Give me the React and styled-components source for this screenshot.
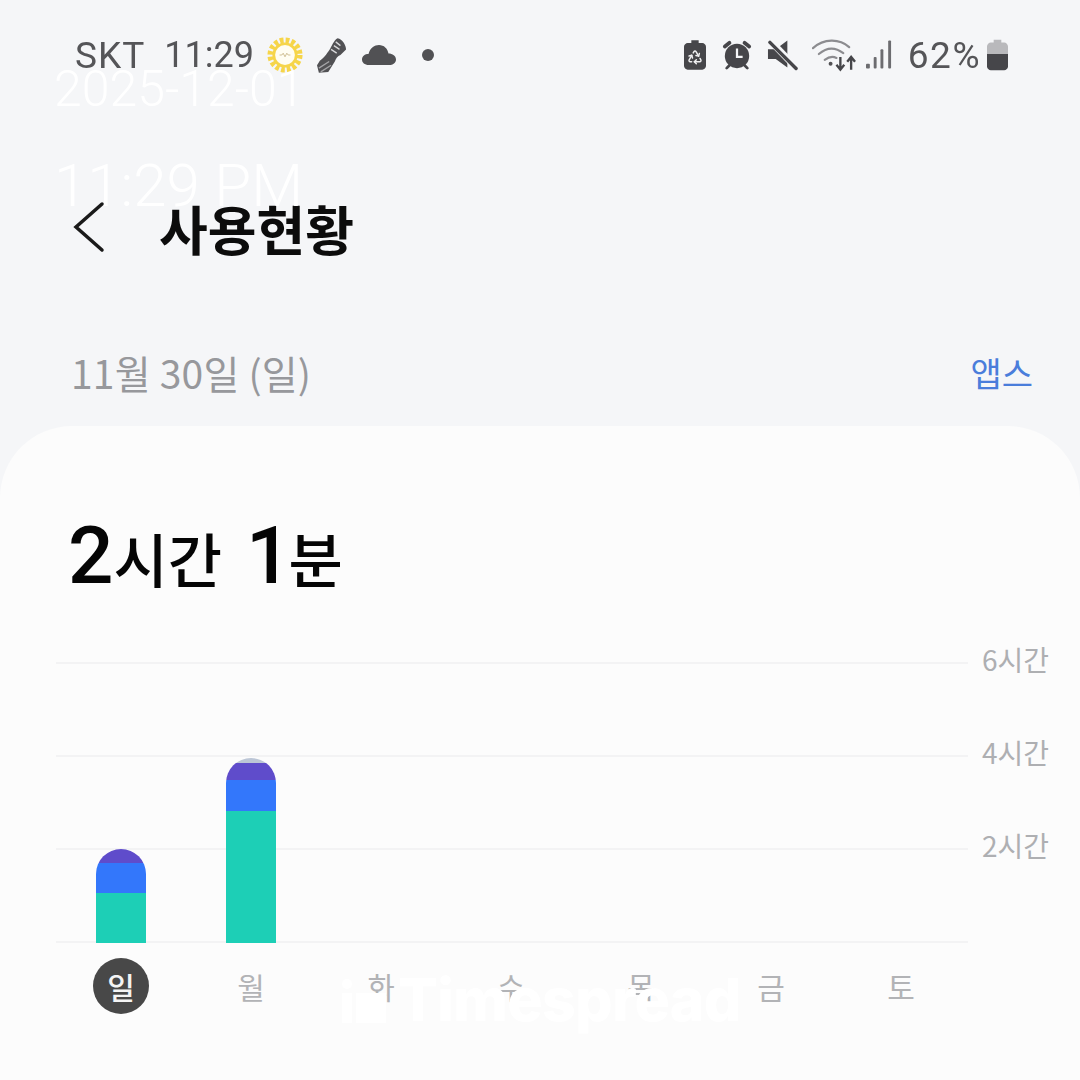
import React from "react";
import styled, { createGlobalStyle } from "styled-components";
import { Recycle } from "lucide-react";

const GlobalStyle = createGlobalStyle`
  html, body {
    margin: 0;
    padding: 0;
    background: #f5f6f8;
  }
`;

const KR = `"Noto Sans CJK KR", "Noto Sans", sans-serif`;

const Page = styled.div`
  position: relative;
  width: 1080px;
  height: 1080px;
  overflow: hidden;
  background: #f5f6f8;
  font-family: ${KR};
`;

const StatusBar = styled.div`
  display: flex;
  align-items: center;
  justify-content: space-between;
  height: 110px;
  padding: 0 72px 0 75px;
  box-sizing: border-box;
  color: #555558;
  filter: blur(0.5px);
`;

const StatusGroup = styled.div`
  display: flex;
  align-items: center;
`;

const StatusText = styled.span`
  font-family: Roboto, "Liberation Sans", sans-serif;
  font-size: ${(p) => p.$size || 37}px;
  font-weight: 400;
  letter-spacing: ${(p) => p.$spacing || 0}px;
  margin-right: ${(p) => p.$right || 0}px;
  white-space: pre;
`;

const SaverIconBox = styled.div`
  position: relative;
  width: 22px;
  height: 32px;
  margin-right: 16px;
`;

const SaverGlyph = styled(Recycle)`
  position: absolute;
  left: 3px;
  top: 10px;
`;

const IconSvg = styled.svg`
  flex: none;
  margin-left: ${(p) => p.$left || 0}px;
  margin-right: ${(p) => p.$right || 0}px;
`;

const Header = styled.div`
  display: flex;
  align-items: center;
  height: 72px;
  margin-top: 79px;
  padding-left: 72px;
`;

const BackIcon = styled.svg`
  width: 34px;
  height: 56px;
  margin-right: 53px;
`;

const Title = styled.h1`
  margin: 6px 0 0;
  font-size: 53px;
  font-weight: 700;
  line-height: 72px;
  color: #0c0c0c;
`;

const DateRow = styled.div`
  display: flex;
  align-items: center;
  justify-content: space-between;
  height: 60px;
  margin-top: 81px;
  padding: 0 47px 0 71px;
`;

const DateLabel = styled.span`
  font-size: 39px;
  letter-spacing: 0.2px;
  color: #97989c;
`;

const AppsLink = styled.span`
  font-size: 34px;
  color: #4a7ddb;
`;

const Card = styled.div`
  height: 654px;
  margin-top: 24px;
  padding: 84px 0 0 56px;
  box-sizing: border-box;
  background: #fcfcfc;
  border-radius: 72px 72px 0 0;
`;

const Usage = styled.div`
  display: flex;
  align-items: baseline;
  height: 92px;
  padding-left: 12px;
  color: #050505;
  line-height: 92px;
`;

const UsageNumber = styled.span`
  font-family: Roboto, "Liberation Sans", sans-serif;
  font-size: 80px;
  font-weight: 500;
  margin-right: ${(p) => p.$right || 0}px;
`;

const UsageUnit = styled.span`
  font-size: 59px;
  font-weight: 500;
  margin-right: ${(p) => p.$right || 0}px;
`;

const Chart = styled.div`
  display: grid;
  margin-top: 14px;
`;

const GridLayer = styled.div`
  grid-area: 1 / 1;
`;

const GridRow = styled.div`
  display: flex;
  align-items: center;
  height: 93px;
`;

const GridLine = styled.div`
  width: 912px;
  height: 2px;
  background: #f3f3f4;
`;

const GridLabel = styled.span`
  margin: 0 0 8px 14px;
  font-size: 28px;
  line-height: 36px;
  color: #aeafb2;
`;

const BarLayer = styled.div`
  grid-area: 1 / 1;
  display: grid;
  grid-template-columns: repeat(7, 130px);
  align-items: end;
  padding-bottom: 45px;
`;

const Bar = styled.div`
  display: flex;
  flex-direction: column;
  width: 50px;
  justify-self: center;
  overflow: hidden;
  border-radius: 25px 25px 0 0;
`;

const Segment = styled.div`
  flex: none;
  background: ${(p) => p.$color};
`;

const DayRow = styled.div`
  display: grid;
  grid-template-columns: repeat(7, 130px);
  margin-top: -30px;
`;

const Day = styled.div`
  display: flex;
  align-items: center;
  justify-content: center;
  width: 56px;
  height: 56px;
  justify-self: center;
  border-radius: 50%;
  font-size: 30px;
  font-weight: ${(p) => (p.$active ? 500 : 400)};
  color: ${(p) => (p.$active ? "#f4f4f4" : "#b2b3b6")};
  background: ${(p) => (p.$active ? "#484848" : "transparent")};
`;

const Stamp = styled.div`
  position: absolute;
  left: 54px;
  top: ${(p) => p.$top}px;
  font-family: Roboto, "Liberation Sans", sans-serif;
  font-weight: 300;
  font-size: ${(p) => p.$size}px;
  line-height: 1;
  color: #ffffff;
`;

const Brand = styled.div`
  position: absolute;
  left: 342px;
  top: 964px;
  display: flex;
  align-items: center;
  gap: 12px;
  font-family: Inter, "Liberation Sans", sans-serif;
  font-weight: 800;
  font-size: 59px;
  line-height: 72px;
  letter-spacing: -0.7px;
  color: #ffffff;
`;

const WeatherSun = () => (
  <IconSvg width="36" height="36" viewBox="0 0 40 40" $left={3} $right={14}>
    <circle cx="20" cy="20" r="16" fill="none" stroke="#f6d54a" strokeWidth="7" strokeDasharray="4 2.300" />
    <circle cx="20" cy="20" r="14" fill="#f6d54a" />
    <circle cx="20" cy="20" r="11" fill="#fffdf2" />
    <path d="M14 20l2.500 0l1.500-2l2 4l2-4l1.500 2l2.500 0" fill="none" stroke="#c9b88a" strokeWidth="1" />
  </IconSvg>
);

const ShoeIcon = () => (
  <IconSvg width="30" height="36" viewBox="0 0 32 38" $right={15}>
    <path d="M22 1C27 2 31 8 31 13L25 19C22 20 20 23 19 26L12 37L2 38L0 30L3 25C8 22 10 18 13 14C16 9 18 3 22 1Z" fill="#515154" />
    <path d="M15 13l6 4M18 9l6 4M20 5l5 4" stroke="#d8d8da" strokeWidth="1.400" />
    <path d="M2 33l11-7M4 37l11-7" stroke="#a5a5a8" strokeWidth="1.400" />
  </IconSvg>
);

const CloudIcon = () => (
  <IconSvg width="34" height="22" viewBox="0 0 34 22" $right={25}>
    <path d="M7 21C2.500 21 0 18.500 0 15.500C0 12 3 10 6.500 10C8 4 12.500 1 17 1C22 1 25.500 4.500 26.500 9.500C30.500 9.500 34 12 34 15.500C34 19 31 21 27 21z" fill="#515154" />
  </IconSvg>
);

const DotIcon = () => (
  <IconSvg width="14" height="14" viewBox="0 0 14 14">
    <circle cx="7" cy="7" r="6" fill="#515154" />
  </IconSvg>
);

const BatterySaverIcon = () => (
  <SaverIconBox>
    <IconSvg width="22" height="32" viewBox="0 0 24 32">
      <path d="M8 0h8v3h4c2 0 4 2 4 4v21c0 2-2 4-4 4H4c-2 0-4-2-4-4V7c0-2 2-4 4-4h4z" fill="#46464a" />
    </IconSvg>
    <SaverGlyph size={16} color="#f0f0f2" strokeWidth={2.200} />
  </SaverIconBox>
);

const AlarmIcon = () => (
  <IconSvg width="30" height="32" viewBox="0 0 32 32" $right={15}>
    <circle cx="16" cy="17" r="13" fill="#46464a" />
    <path d="M3 7l5-4M29 7l-5-4" stroke="#46464a" strokeWidth="4" strokeLinecap="round" />
    <path d="M8 27l-3 3M24 27l3 3" stroke="#46464a" strokeWidth="3" strokeLinecap="round" />
    <path d="M16 9v9h6" fill="none" stroke="#f5f6f8" strokeWidth="2.400" />
  </IconSvg>
);

const MuteIcon = () => (
  <IconSvg width="31" height="32" viewBox="0 0 32 32" $right={14}>
    <path d="M1 10h8L21 1v28L9 20H1z" fill="#46464a" />
    <path d="M3 1l28 29" stroke="#f5f6f8" strokeWidth="7" />
    <path d="M3 3l27 27" stroke="#46464a" strokeWidth="3.500" strokeLinecap="round" />
  </IconSvg>
);

const WifiIcon = () => (
  <IconSvg width="45" height="36" viewBox="0 0 46 36" $right={9}>
    <g fill="none" stroke="#8c8c90" strokeWidth="2.200" strokeLinecap="round">
      <path d="M1 11C12 1 28 1 38 10" />
      <path d="M7 17C15 10 24 10 32 16" />
      <path d="M13 23C17 20 21 19 25 21" />
    </g>
    <circle cx="19" cy="27" r="2" fill="#515154" />
    <path d="M29 20v12M25 28l4 5l4-5" fill="none" stroke="#46464a" strokeWidth="2.400" />
    <path d="M40 33V21M36 25l4-5l4 5" fill="none" stroke="#46464a" strokeWidth="2.400" />
  </IconSvg>
);

const SignalIcon = () => (
  <IconSvg width="27" height="32" viewBox="0 0 28 32" $right={15}>
    <g fill="#6c6c70">
      <rect x="0" y="25" width="4" height="5" rx="1" />
      <rect x="8" y="18" width="3" height="12" rx="1" />
      <rect x="15" y="10" width="3" height="20" rx="1" />
      <rect x="23" y="1" width="3" height="29" rx="1" />
    </g>
  </IconSvg>
);

const BatteryIcon = () => (
  <IconSvg width="21" height="32" viewBox="0 0 22 32">
    <path d="M7 0h8v3h3c2 0 4 2 4 4v8H0V7c0-2 2-4 4-4h3z" fill="#b9b9bc" />
    <path d="M0 15h22v13c0 2-2 4-4 4H4c-2 0-4-2-4-4z" fill="#46464a" />
  </IconSvg>
);

const days = ["일", "월", "화", "수", "목", "금", "토"];
const gridLabels = ["6시간", "4시간", "2시간", ""];

const bars = [
  { grey: 0, purple: 14, blue: 30, green: 50 },
  { grey: 5, purple: 17, blue: 31, green: 132 },
];

function App() {
  return (
    <Page>
      <GlobalStyle />
      <StatusBar>
        <StatusGroup>
          <StatusText $spacing={1} $right={19}>SKT</StatusText>
          <StatusText $size={36} $right={10}>11:29</StatusText>
          <WeatherSun />
          <ShoeIcon />
          <CloudIcon />
          <DotIcon />
        </StatusGroup>
        <StatusGroup>
          <BatterySaverIcon />
          <AlarmIcon />
          <MuteIcon />
          <WifiIcon />
          <SignalIcon />
          <StatusText $spacing={1.500} $right={6}>62%</StatusText>
          <BatteryIcon />
        </StatusGroup>
      </StatusBar>

      <Header>
        <BackIcon viewBox="0 0 34 56">
          <path d="M30 7L4 30l26 23" fill="none" stroke="#1a1a1a" strokeWidth="3.500" strokeLinecap="round" />
        </BackIcon>
        <Title>사용현황</Title>
      </Header>

      <DateRow>
        <DateLabel>11월 30일 (일)</DateLabel>
        <AppsLink>앱스</AppsLink>
      </DateRow>

      <Card>
        <Usage>
          <UsageNumber>2</UsageNumber>
          <UsageUnit $right={24}>시간</UsageUnit>
          <UsageNumber $right={-3}>1</UsageNumber>
          <UsageUnit>분</UsageUnit>
        </Usage>

        <Chart>
          <GridLayer>
            {gridLabels.map((label, i) => (
              <GridRow key={i}>
                <GridLine />
                <GridLabel>{label}</GridLabel>
              </GridRow>
            ))}
          </GridLayer>
          <BarLayer>
            {bars.map((bar, i) => (
              <Bar key={i}>
                <Segment $color="#bcc6d6" style={{ height: bar.grey }} />
                <Segment $color="#5f4ccb" style={{ height: bar.purple }} />
                <Segment $color="#3377fb" style={{ height: bar.blue }} />
                <Segment $color="#1dcfb6" style={{ height: bar.green }} />
              </Bar>
            ))}
          </BarLayer>
        </Chart>

        <DayRow>
          {days.map((day, i) => (
            <Day key={day} $active={i === 0}>
              {day}
            </Day>
          ))}
        </DayRow>
      </Card>

      <Stamp $top={64} $size={50}>2025-12-01</Stamp>
      <Stamp $top={156} $size={60}>11:29 PM</Stamp>
      <Brand>
        <svg width="44" height="46" viewBox="0 0 44 46">
          <rect x="0" y="2" width="10" height="10" rx="5" fill="#fff" />
          <rect x="0" y="16" width="10" height="30" fill="#fff" />
          <rect x="14" y="16" width="30" height="30" fill="#fff" />
        </svg>
        Timespread
      </Brand>
    </Page>
  );
}

export default App;
